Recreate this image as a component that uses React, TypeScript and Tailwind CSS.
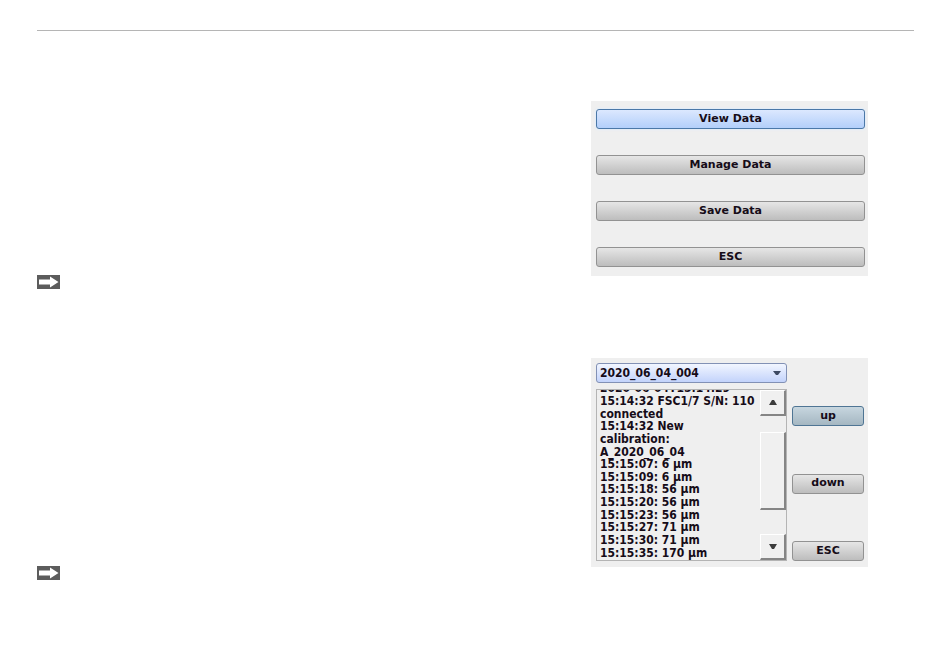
import { useState } from 'react';

const menuItems = ['View Data', 'Manage Data', 'Save Data', 'ESC'];

const logLines = [
  '2020-06-04T15:14:29',
  '15:14:32 FSC1/7 S/N: 110',
  'connected',
  '15:14:32 New',
  'calibration:',
  'A_2020_06_04',
  '15:15:07: 6 µm',
  '15:15:09: 6 µm',
  '15:15:18: 56 µm',
  '15:15:20: 56 µm',
  '15:15:23: 56 µm',
  '15:15:27: 71 µm',
  '15:15:30: 71 µm',
  '15:15:35: 170 µm'
];

const tones = {
  grey: 'border-[#929292] bg-linear-to-b from-[#e6e6e6] to-[#bdbdbd]',
  blue: 'border-[#4b78a8] bg-linear-to-b from-[#dce8fe] to-[#b3cffa] shadow-[0_0_2px_1px_#e2edf9]',
  steel: 'border-[#4f7594] bg-linear-to-b from-[#c7d6df] to-[#a5b7c2]'
};

function DeviceButton({ label, tone = 'grey' }: { label: string; tone?: keyof typeof tones }) {
  return (
    <button
      type="button"
      className={`flex h-5 w-full items-center justify-center rounded-[3px] border font-['DejaVu_Sans',sans-serif] text-[11px] ${tones[tone]}`}
    >
      {label}
    </button>
  );
}

function NoteArrow() {
  return (
    <svg className="h-[14px] w-[23px]" viewBox="0 0 23 14" role="img" aria-label="Note">
      <path d="M0 0h23v14H0z" fill="#5c5c5c" />
      <path d="M2 4.5h11V1.5L21.5 7 13 12.5v-3H2z" fill="#fff" />
    </svg>
  );
}

function ScrollButton({ direction }: { direction: 'up' | 'down' }) {
  return (
    <button
      type="button"
      aria-label={`Scroll ${direction}`}
      className="flex h-[26px] w-full items-center justify-center border-t border-r-2 border-b-2 border-l border-t-white border-r-[#858585] border-b-[#858585] border-l-white bg-[#f0f0f0]"
    >
      <svg className="h-[5px] w-2" viewBox="0 0 8 5" aria-hidden="true">
        <path d={direction === 'up' ? 'M0 5 3 0h2l3 5z' : 'M0 0h8L5 5H3z'} fill="#3c3c3c" />
      </svg>
    </button>
  );
}

function MenuPanel() {
  return (
    <nav className="mb-[13px] flex flex-col gap-[26px] bg-[#efefef] pt-2 pr-[3px] pb-[9px] pl-[5px]">
      {menuItems.map((item, index) => (
        <DeviceButton key={item} label={item} tone={index === 0 ? 'blue' : 'grey'} />
      ))}
    </nav>
  );
}

function DataPanel() {
  const [file, setFile] = useState('2020_06_04_004');

  return (
    <section className="mb-[13px] flex gap-[5px] bg-[#efefef] pt-[5px] pr-1 pb-[6px] pl-[5px]">
      <div className="flex w-[191px] flex-col gap-[6px]">
        <div className="relative">
          <select
            aria-label="Data file"
            value={file}
            onChange={(event) => setFile(event.target.value)}
            className="block h-5 w-full appearance-none rounded-[3px] border border-[#8291b5] bg-linear-to-b from-[#f2f6ff] to-[#c3d3fb] pl-[3px]"
          >
            <option>2020_06_04_004</option>
          </select>
          <svg
            className="pointer-events-none absolute top-2 right-[6px] h-1 w-2"
            viewBox="0 0 8 4"
            aria-hidden="true"
          >
            <path d="M0 0h8L5 4H3z" fill="#3d4a63" />
          </svg>
        </div>
        <div className="flex h-[172px] overflow-hidden border border-[#b4b4b4]">
          <ol className="-mt-2 mb-px flex flex-1 flex-col pl-[3px] whitespace-nowrap">
            {logLines.map((line) => (
              <li key={line} className="flex h-0 flex-1 items-center">
                {line}
              </li>
            ))}
          </ol>
          <div className="flex w-[26px] flex-col">
            <ScrollButton direction="up" />
            <div className="mt-4 h-[78px] border-t border-r-2 border-b-2 border-l border-t-white border-r-[#858585] border-b-[#858585] border-l-white bg-[#f0f0f0]" />
            <div className="mt-auto">
              <ScrollButton direction="down" />
            </div>
          </div>
        </div>
      </div>
      <div className="flex flex-1 flex-col justify-between pt-[43px]">
        <DeviceButton label="up" tone="steel" />
        <DeviceButton label="down" />
        <DeviceButton label="ESC" />
      </div>
    </section>
  );
}

export default function App() {
  return (
    <main className="min-h-screen bg-white px-9 pt-[30px] font-['DejaVu_Sans_Condensed','DejaVu_Sans',sans-serif] text-[12px] font-bold text-[#160c18]">
      <hr className="ml-px border-t border-[#b5b5b5]" />
      <div className="grid grid-cols-[1fr_277px] gap-y-[69px] pt-[70px] pr-[46px]">
        <div className="flex items-end pl-px">
          <NoteArrow />
        </div>
        <MenuPanel />
        <div className="flex items-end pl-px">
          <NoteArrow />
        </div>
        <DataPanel />
      </div>
    </main>
  );
}
